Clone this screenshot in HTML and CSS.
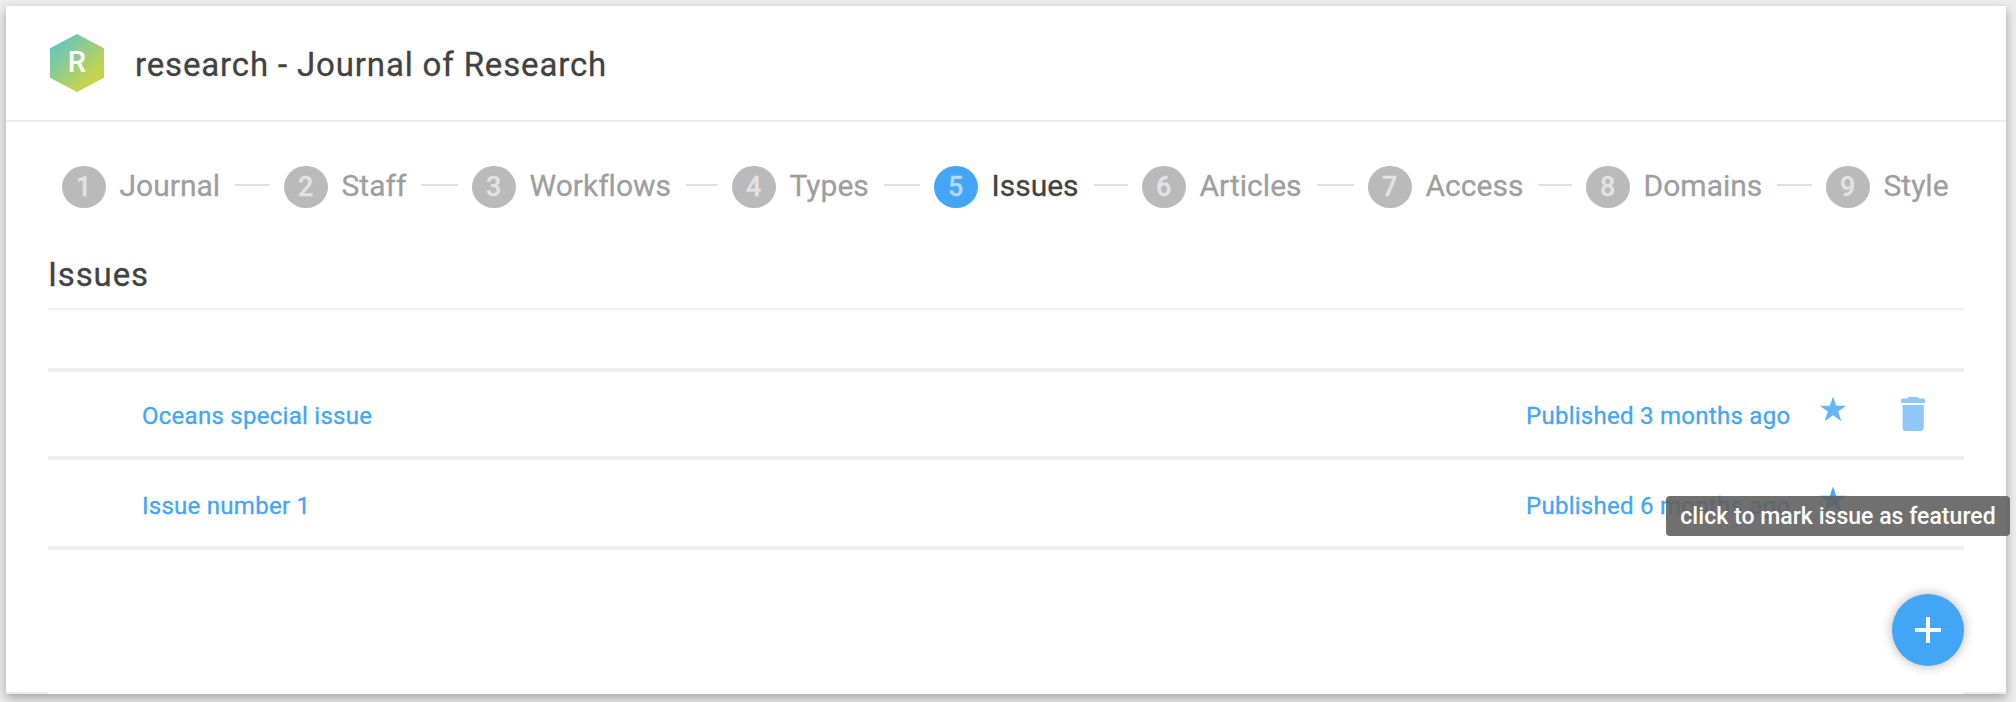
FILE: index.html
```html
<!DOCTYPE html>
<html lang="en">
<head>
<meta charset="utf-8">
<title>research - Journal of Research</title>
<link rel="stylesheet" href="styles.css">
</head>
<body>
<main class="card">
  <header class="header">
    <svg class="logo" width="54" height="58" viewBox="0 0 54 58">
      <defs><linearGradient id="g" gradientUnits="userSpaceOnUse" x1="4" y1="8" x2="40" y2="46"><stop offset="0" stop-color="#5fc6c3"/><stop offset="1" stop-color="#c5d44c"/></linearGradient></defs>
      <path d="M27 0 54 14.2V43.8L27 58 0 43.8V14.2Z" fill="url(#g)"/>
      <text class="logo-letter" x="27" y="38.3" text-anchor="middle">R</text>
    </svg>
    <h1 class="title">research - Journal of Research</h1>
  </header>
  <nav class="steps">
    <a class="step"><span class="num">1</span><span class="label">Journal</span><i class="dash"></i></a>
    <a class="step"><span class="num">2</span><span class="label">Staff</span><i class="dash"></i></a>
    <a class="step"><span class="num">3</span><span class="label">Workflows</span><i class="dash"></i></a>
    <a class="step"><span class="num">4</span><span class="label">Types</span><i class="dash"></i></a>
    <a class="step active"><span class="num">5</span><span class="label">Issues</span><i class="dash"></i></a>
    <a class="step"><span class="num">6</span><span class="label">Articles</span><i class="dash"></i></a>
    <a class="step"><span class="num">7</span><span class="label">Access</span><i class="dash"></i></a>
    <a class="step"><span class="num">8</span><span class="label">Domains</span><i class="dash"></i></a>
    <a class="step"><span class="num">9</span><span class="label">Style</span></a>
  </nav>
  <section class="content">
    <h2 class="heading">Issues</h2>
    <div class="list">
      <div class="row">
        <a class="name">Oceans special issue</a>
        <span class="published">Published 3 months ago</span>
        <svg class="star faded" width="28" height="26" viewBox="0 0 28 26"><path d="M14 .5 17.1 9.7H27.3L19.2 15.5 22.4 25.2 14 19.3 5.6 25.2 8.8 15.5.7 9.7H10.9Z"/></svg>
        <svg class="trash" width="26" height="34" viewBox="0 0 26 34"><path d="M1 6V3Q1 1.5 2.5 1.5H7Q8 0 9 0H17Q18 0 19 1.5H23.5Q25 1.5 25 3V6ZM2.6 8H23.8V30.5Q23.8 34 20.3 34H6.1Q2.6 34 2.6 30.5Z"/></svg>
      </div>
      <div class="row second">
        <a class="name">Issue number 1</a>
        <span class="published">Published 6 months ago</span>
        <span class="feature">
          <svg class="star" width="28" height="26" viewBox="0 0 28 26"><path d="M14 .5 17.1 9.7H27.3L19.2 15.5 22.4 25.2 14 19.3 5.6 25.2 8.8 15.5.7 9.7H10.9Z"/></svg>
          <span class="tooltip">click to mark issue as featured</span>
        </span>
      </div>
    </div>
    <button class="fab" aria-label="Add issue"><svg width="26" height="26" viewBox="0 0 26 26"><path d="M13 0V26M0 13H26" stroke="#fff" stroke-width="4"/></svg></button>
  </section>
  <div class="foot"></div>
</main>
</body>
</html>
```
FILE: styles.css
```css
* { box-sizing: border-box; }
body {
  margin: 0;
  height: 702px;
  padding: 6px 10px 8px 6px;
  overflow: hidden;
  background: #ededed;
  color: #424242;
  font-family: Roboto, sans-serif;
  -webkit-text-stroke: .3px;
}
.card {
  display: flex;
  flex-direction: column;
  height: 688px;
  background: #fff;
  box-shadow: 0 4px 10px rgba(0, 0, 0, .32);
}
.header {
  display: flex;
  align-items: flex-start;
  gap: 31px;
  height: 116px;
  padding: 28px 44px 0;
  border-bottom: 2px solid #ececec;
}
.logo-letter { fill: #fff; font-size: 29px; font-weight: 500; -webkit-text-stroke: 0; }
.title { margin: 11px 0 0; font-size: 33px; line-height: 40px; font-weight: 400; letter-spacing: .85px; }
.steps {
  display: grid;
  grid-template-columns: 222px 188px 260px 202px 208px 226px 218px 240px auto;
  height: 118px;
  padding: 44px 0 0 56px;
}
.step {
  display: flex;
  align-items: flex-start;
  height: 42px;
  padding-right: 14px;
  color: #9e9e9e;
  font-size: 30px;
  line-height: 40px;
}
.num {
  flex: none;
  width: 43.5px;
  height: 42px;
  margin-right: 14px;
  border-radius: 50%;
  background: #bababa;
  color: #e3e3e3;
  font-size: 27px;
  font-weight: 500;
  line-height: 42px;
  text-align: center;
}
.label { letter-spacing: .01px; font-variant-ligatures: common-ligatures; }
.dash { flex: 1; height: 2px; margin: 18px 0 0 15px; background: #e0e0e0; }
.active { color: #424242; }
.active .num { background: #42a5f5; color: #b3dafb; }
.content {
  display: flex;
  flex-direction: column;
  flex: 1;
  margin: 0 42px;
}
.heading {
  height: 70px;
  margin: 0;
  padding-top: 15px;
  border-bottom: 2px solid #eee;
  font-size: 33px;
  line-height: 40px;
  font-weight: 400;
  letter-spacing: .85px;
}
.list { margin-top: 58px; border-top: 4px solid #eee; }
.row {
  display: grid;
  grid-template-columns: 1384px 292.5px 81.5px 26px;
  align-items: start;
  height: 88px;
  padding: 25px 0 0 94px;
  border-bottom: 4px solid #eee;
  color: #42a5f5;
  fill: #42a5f5;
  font-size: 24px;
  line-height: 38px;
  letter-spacing: .27px;
}
.second { height: 90px; padding-top: 27px; }
.star { display: block; margin-top: -1px; }
.faded { opacity: .82; }
.trash { opacity: .6; }
.feature { position: relative; }
.tooltip {
  position: absolute;
  top: 9px;
  left: -152.5px;
  width: 344px;
  height: 40px;
  border-radius: 4px;
  background: rgba(97, 97, 97, .9);
  color: #fff;
  font-size: 23px;
  font-weight: 500;
  letter-spacing: .03px;
  -webkit-text-stroke: 0;
  line-height: 41px;
  text-align: center;
  white-space: nowrap;
}
.fab {
  display: grid;
  place-items: center;
  align-self: flex-end;
  width: 72px;
  height: 72px;
  margin-top: 44px;
  padding: 0;
  border: 0;
  border-radius: 50%;
  background: #42a5f5;
  box-shadow: 0 0 12px rgba(0, 0, 0, .3);
}
.foot {
  height: 2px;
  background: linear-gradient(90deg, #eaeaea 42px, #fff 42px, #fff 1958px, #eaeaea 1958px);
}
```
